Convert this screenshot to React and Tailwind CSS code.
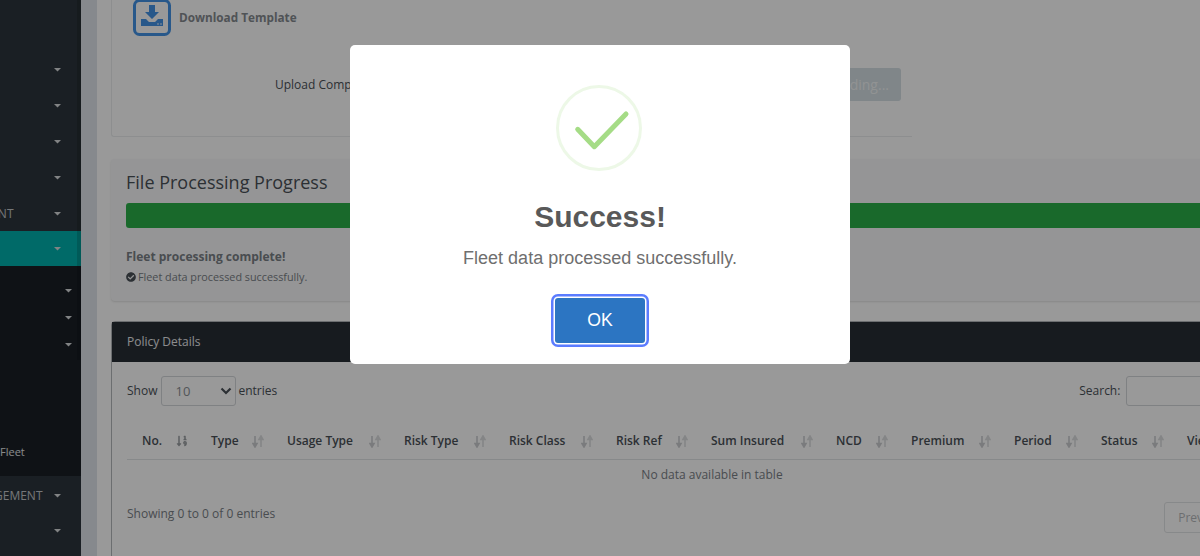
import React from 'react'
import { FaCheckCircle, FaSortNumericDown } from 'react-icons/fa'

const columns = [
  { label: 'No.', width: 'w-[69px]' },
  { label: 'Type', width: 'w-[76px]' },
  { label: 'Usage Type', width: 'w-[117px]' },
  { label: 'Risk Type', width: 'w-[105px]' },
  { label: 'Risk Class', width: 'w-[107px]' },
  { label: 'Risk Ref', width: 'w-[95px]' },
  { label: 'Sum Insured', width: 'w-[125px]' },
  { label: 'NCD', width: 'w-[75px]' },
  { label: 'Premium', width: 'w-[103px]' },
  { label: 'Period', width: 'w-[87px]' },
  { label: 'Status', width: 'w-[86px]' },
  { label: 'View', width: 'w-[80px]' },
]

function Caret() {
  return (
    <svg width="7" height="4" viewBox="0 0 7 4" className="shrink-0">
      <polygon points="0,0 7,0 3.5,3.5" fill="#d8dadc" />
    </svg>
  )
}

function SortIcon() {
  return (
    <svg width="12" height="13" viewBox="0 0 12 13" className="shrink-0">
      <path d="M3 1v9M1 8.5 3 12l2-3.5z" stroke="#ccced1" strokeWidth="1.6" fill="#ccced1" />
      <path d="M9 12V3M7 4.5 9 1l2 3.5z" stroke="#dcdee0" strokeWidth="1.6" fill="#dcdee0" />
    </svg>
  )
}

function MenuRow({ label, height, active }) {
  return (
    <div className={`${height} flex items-center justify-between pr-[20px] ${active ? 'bg-[#00b1ad]' : ''}`}>
      <span className="text-[12px] text-[#c4c7ca] whitespace-nowrap">{label}</span>
      <Caret />
    </div>
  )
}

function SubRow({ label, caret }) {
  return (
    <div className="h-[27px] flex items-center justify-between pr-[9px]">
      <span className="text-[11px] text-[#e4e6e8]">{label}</span>
      {caret && <Caret />}
    </div>
  )
}

function Sidebar() {
  return (
    <aside className="relative w-[81px] h-[556px] shrink-0 bg-[#2c353c] overflow-hidden">
      <div className="h-[51px]" />
      <MenuRow height="h-[37px]" />
      <MenuRow height="h-[36px]" />
      <MenuRow height="h-[36px]" />
      <MenuRow height="h-[36px]" />
      <MenuRow height="h-[35px]" label={<span className="-ml-[70px] block">MANAGEMENT</span>} />
      <MenuRow height="h-[35px]" active />
      <div className="h-[210px] bg-[#191f26] pt-[11px]">
        <SubRow caret />
        <SubRow caret />
        <SubRow caret />
        <SubRow />
        <SubRow />
        <SubRow />
        <SubRow label="Fleet" />
      </div>
      <div className="h-[40px] flex items-center justify-between pr-[20px]">
        <span className="-ml-[41px] text-[12px] text-[#c4c7ca] whitespace-nowrap">MANAGEMENT</span>
        <Caret />
      </div>
      <div className="h-[30px] flex items-center justify-end pr-[20px]">
        <Caret />
      </div>
      <div className="absolute top-0 right-0 w-[4px] h-[360px] bg-black/15" />
    </aside>
  )
}

function UploadCard() {
  return (
    <section className="w-[801px] h-[138px] border-l border-b border-[#ebedef] rounded-bl-[3px] pl-[21px] pr-[11px]">
      <div className="flex items-center gap-[8px] -mt-[1px]">
        <svg width="38" height="37" viewBox="0 0 38 37" className="shrink-0">
          <rect x="1.5" y="1.5" width="35" height="34" rx="5" fill="none" stroke="#4493e6" strokeWidth="3" />
          <path d="M16 6h6v7h4l-7 7-7-7h4z" fill="#4493e6" />
          <path d="M8 20h5l3 3h6l3-3h5v7H8z" fill="#4493e6" />
          <circle cx="25" cy="25" r="0.8" fill="#fff" />
          <circle cx="28" cy="25" r="0.8" fill="#fff" />
        </svg>
        <span className="text-[11.75px] font-bold text-[#858a8f]">Download Template</span>
      </div>
      <div className="flex items-center mt-[32px] pl-[142px]">
        <span className="text-[12px] text-[#4a5158]">Upload Company Fleet File</span>
        <button className="ml-auto h-[33px] px-[12px] rounded-[3px] bg-[#d5dfe4] text-[14px] text-[#f2f5f6]">
          Uploading...
        </button>
      </div>
    </section>
  )
}

function ProgressCard() {
  return (
    <section className="w-[1200px] h-[142px] mt-[22px] rounded-[4px] bg-[#f8f9fa] shadow-[0_1px_2px_rgba(0,0,0,0.12)] pl-[15px] pt-[11px]">
      <h2 className="text-[18px] leading-[24px] text-[#4a5158]">File Processing Progress</h2>
      <div className="h-[25px] mt-[9px] rounded-[3px] bg-[#2bb049]" />
      <p className="mt-[21px] text-[12px] leading-[16px] font-bold text-[#7a8086]">Fleet processing complete!</p>
      <p className="mt-[5px] flex items-center gap-[2px] text-[10.8px] leading-[13px] text-[#7a8086]">
        <FaCheckCircle className="w-[10px] h-[10px] text-[#4a5158]" />
        Fleet data processed successfully.
      </p>
    </section>
  )
}

function PolicyCard() {
  return (
    <section className="w-[1200px] h-[300px] mt-[20px] border border-[#b5b8bb] rounded-t-[4px]">
      <div className="h-[40px] bg-[#272d35] flex items-center pl-[15px] text-[12px] font-medium text-[#e8eaec]">
        Policy Details
      </div>
      <div className="pl-[15px]">
        <div className="flex items-center h-[30px] mt-[14px] text-[12px] text-[#4a5158]">
          <span>Show</span>
          <div className="ml-[4px] w-[75px] h-[30px] border border-[#d4d7da] rounded-[3px] flex items-center justify-between pl-[13px] pr-[3px]">
            <span className="text-[13px] mt-[2px] text-[#8a8f94]">10</span>
            <svg width="12" height="8" viewBox="0 0 12 8">
              <path d="M1.5 1.5 6 6 10.500 1.500" fill="none" stroke="#4a5158" strokeWidth="2.200" />
            </svg>
          </div>
          <span className="ml-[2px]">entries</span>
          <span className="ml-[802px]">Search:</span>
          <div className="ml-[6px] w-[120px] h-[30px] shrink-0 border border-[#d4d7da] rounded-[3px]" />
        </div>
        <div className="flex mt-[20px] h-[34px] w-[1170px] border-b border-[#e2e4e6] text-[12px] font-semibold text-[#4a5158]">
          {columns.map((col, i) => (
            <div key={col.label} className={`${col.width} shrink-0 flex items-start justify-between pl-[15px] pr-[8px] pt-[6px] leading-[18px]`}>
              <span className="whitespace-nowrap">{col.label}</span>
              {i === 0 ? <FaSortNumericDown className="w-[12px] h-[12px] mt-[3px] text-[#9a9ea2]" /> : <span className="mt-[3px]"><SortIcon /></span>}
            </div>
          ))}
        </div>
        <div className="w-[1170px] h-[29px] flex items-center justify-center text-[12px] text-[#7a8086]">
          No data available in table
        </div>
        <div className="flex items-center h-[31px] mt-[13px]">
          <span className="mb-[8px] text-[12px] text-[#7a8086]">Showing 0 to 0 of 0 entries</span>
          <div className="ml-[889px] w-[80px] h-[31px] shrink-0 border border-[#e2e4e6] rounded-[3px] flex items-center pl-[13px] text-[12px] text-[#b5b8bb]">
            Previous
          </div>
        </div>
      </div>
    </section>
  )
}

function SuccessModal() {
  return (
    <div className="absolute inset-0 bg-black/40 flex justify-center items-start pt-[45px]">
      <div className="w-[500px] h-[319px] bg-white rounded-[5px] flex flex-col items-center pt-[40px] font-['Liberation_Sans',sans-serif]">
        <svg width="86" height="86" viewBox="0 0 86 86" className="shrink-0 -ml-[2px]">
          <circle cx="43" cy="43" r="41.5" fill="none" stroke="#edf8e7" strokeWidth="3" />
          <path d="M21.7 44.3 38.3 61.7 70 29" fill="none" stroke="#a5dc86" strokeWidth="5" strokeLinecap="round" strokeLinejoin="round" />
        </svg>
        <h2 className="mt-[28px] text-[30px] leading-[36px] font-bold text-[#595959]">Success!</h2>
        <p className="mt-[11px] text-[18px] leading-[24px] text-[#6f6f6f]">Fleet data processed successfully.</p>
        <button className="mt-[28px] w-[90px] h-[45px] rounded-[3px] bg-[#2c75c2] text-white text-[17.6px] ring-[2.5px] ring-[#5b7cff] ring-offset-[1.5px] ring-offset-white">
          OK
        </button>
      </div>
    </div>
  )
}

export default function App() {
  return (
    <div className="relative w-[1200px] h-[556px] overflow-hidden flex bg-white font-['Open_Sans',sans-serif]">
      <Sidebar />
      <div className="w-[16px] shrink-0 bg-[#dfe5ec]" />
      <main className="flex-1 min-w-0 pl-[14px] overflow-hidden">
        <UploadCard />
        <ProgressCard />
        <PolicyCard />
      </main>
      <SuccessModal />
    </div>
  )
}
